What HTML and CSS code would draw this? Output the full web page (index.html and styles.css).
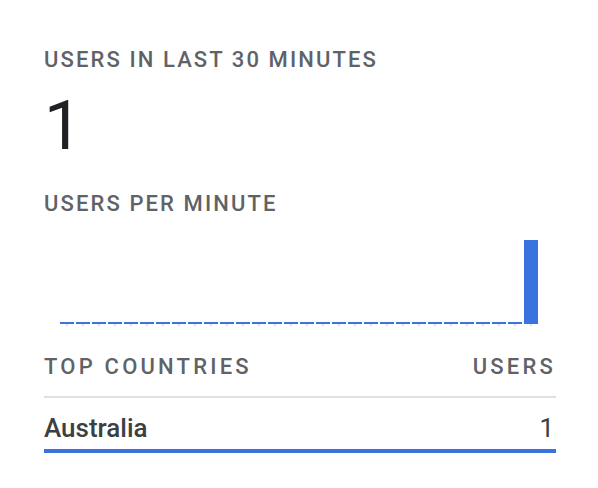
FILE: index.html
```html
<!DOCTYPE html>
<html>
<head>
<meta charset="utf-8">
<link rel="stylesheet" href="styles.css">
</head>
<body>
<div class="card">
  <div class="label title">USERS IN LAST 30 MINUTES</div>
  <div class="big">1</div>
  <div class="label sub">USERS PER MINUTE</div>
  <div class="chart">
    <div class="bar"></div><div class="bar"></div><div class="bar"></div><div class="bar"></div><div class="bar"></div>
    <div class="bar"></div><div class="bar"></div><div class="bar"></div><div class="bar"></div><div class="bar"></div>
    <div class="bar"></div><div class="bar"></div><div class="bar"></div><div class="bar"></div><div class="bar"></div>
    <div class="bar"></div><div class="bar"></div><div class="bar"></div><div class="bar"></div><div class="bar"></div>
    <div class="bar"></div><div class="bar"></div><div class="bar"></div><div class="bar"></div><div class="bar"></div>
    <div class="bar"></div><div class="bar"></div><div class="bar"></div><div class="bar"></div><div class="bar full"></div>
  </div>
  <div class="table-head">
    <span class="label wide">TOP COUNTRIES</span>
    <span class="label wide">USERS</span>
  </div>
  <div class="row">
    <span>Australia</span>
    <span class="value">1</span>
  </div>
</div>
</body>
</html>
```

FILE: styles.css
```css
html, body {
  margin: 0;
  padding: 0;
  background: #ffffff;
}
body {
  font-family: Roboto, "Liberation Sans", sans-serif;
}
.card {
  width: 512px;
  padding: 48px 0 0 44px;
}
.label {
  font-size: 22px;
  line-height: 24px;
  letter-spacing: 2.1px;
  color: #5f6368;
  font-weight: 500;
}
.label.wide {
  letter-spacing: 3.2px;
}
.big {
  font-size: 68px;
  line-height: 68px;
  color: #202124;
  margin-top: 20px;
}
.sub {
  margin-top: 32px;
}
.chart {
  display: flex;
  align-items: flex-end;
  gap: 2px;
  height: 84px;
  margin: 24px 0 0 16px;
  width: 478px;
}
.bar {
  width: 14px;
  height: 2px;
  background: #3873e0;
  flex: none;
  position: relative;
}
.bar::after {
  content: "";
  position: absolute;
  left: 6px;
  top: 100%;
  width: 2px;
  height: 2px;
  background: #e3e3e6;
}
.bar.full {
  height: 84px;
}
.table-head {
  display: flex;
  justify-content: space-between;
  margin-top: 31px;
  padding-bottom: 17px;
  border-bottom: 2px solid #e0e0e3;
}
.row {
  display: flex;
  justify-content: space-between;
  font-size: 26px;
  line-height: 30px;
  font-weight: 500;
  color: #3c4043;
  padding: 15px 2px 6px 0;
  border-bottom: 4px solid #3873e0;
}
.value {
  font-weight: 400;
}
```
